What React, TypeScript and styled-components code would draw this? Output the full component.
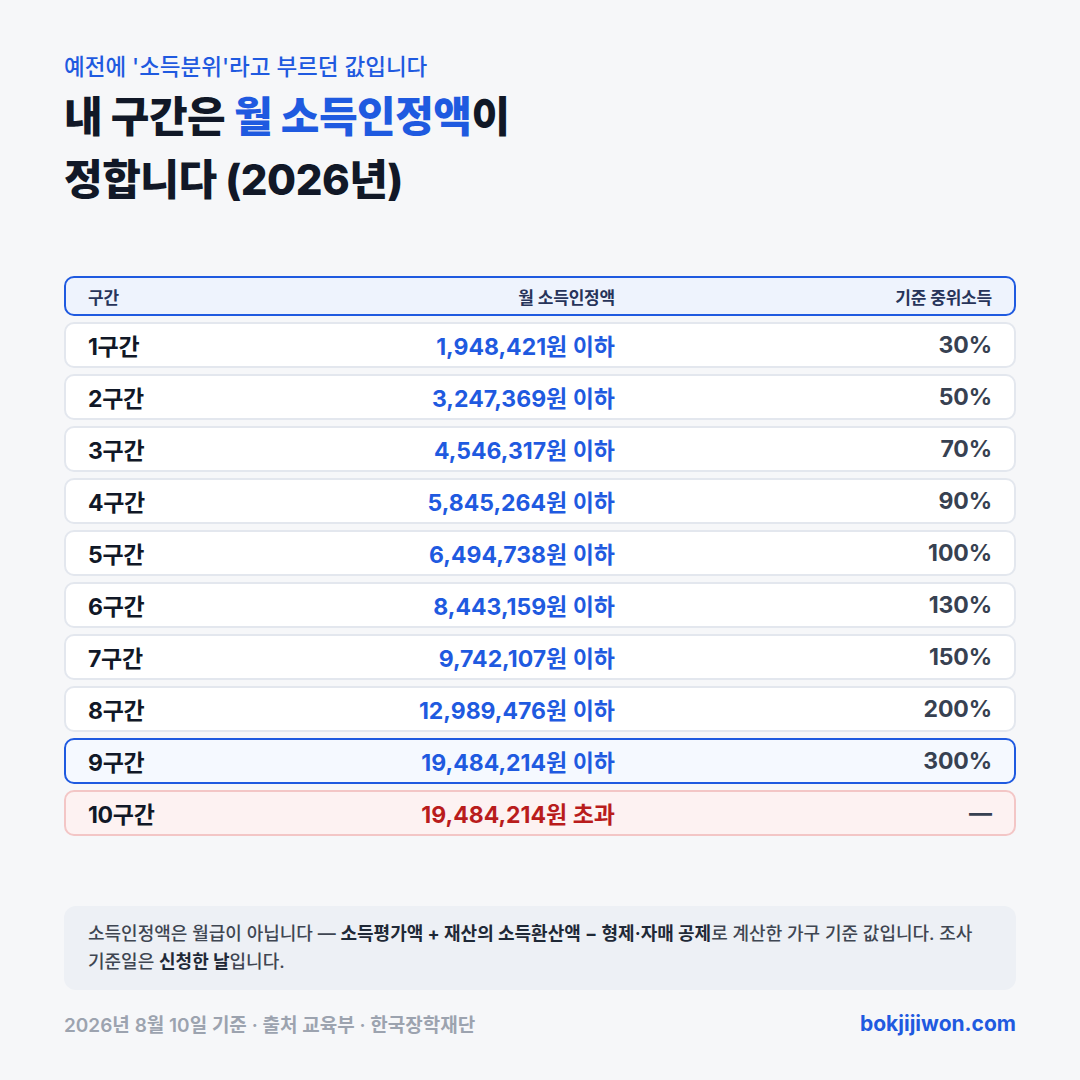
import React from "react";
import styled, {createGlobalStyle} from "styled-components";

type Row = {
    label: string;
    amount: string;
    median: string;
    tone?: "normal" | "highlight" | "over";
};

const rows: Row[] = [
    {label: "1구간", amount: "1,948,421원 이하", median: "30%"},
    {label: "2구간", amount: "3,247,369원 이하", median: "50%"},
    {label: "3구간", amount: "4,546,317원 이하", median: "70%"},
    {label: "4구간", amount: "5,845,264원 이하", median: "90%"},
    {label: "5구간", amount: "6,494,738원 이하", median: "100%"},
    {label: "6구간", amount: "8,443,159원 이하", median: "130%"},
    {label: "7구간", amount: "9,742,107원 이하", median: "150%"},
    {label: "8구간", amount: "12,989,476원 이하", median: "200%"},
    {label: "9구간", amount: "19,484,214원 이하", median: "300%", tone: "highlight"},
    {label: "10구간", amount: "19,484,214원 초과", median: "—", tone: "over"},
];

export default function App() {
    return (
        <>
            <GlobalStyle/>
            <Page>
                <Eyebrow>예전에 '소득분위'라고 부르던 값입니다</Eyebrow>
                <Title>
                    내 구간은 <Accent>월 소득인정액</Accent>이<br/>
                    정합니다 (2026년)
                </Title>

                <Table>
                    <HeaderRow>
                        <HeadCell>구간</HeadCell>
                        <HeadCell $align="right">월 소득인정액</HeadCell>
                        <HeadCell $align="right">기준 중위소득</HeadCell>
                    </HeaderRow>
                    {rows.map((row) => (
                        <DataRow key={row.label} $tone={row.tone ?? "normal"}>
                            <Label>{row.label}</Label>
                            <Amount $over={row.tone === "over"}>{row.amount}</Amount>
                            <Median>{row.median}</Median>
                        </DataRow>
                    ))}
                </Table>

                <Note>
                    소득인정액은 월급이 아닙니다 — <b>소득평가액 + 재산의 소득환산액 − 형제·자매 공제</b>로 계산한 가구 기준 값입니다. 조사
                    기준일은 <b>신청한 날</b>입니다.
                </Note>

                <Footer>
                    <Source>2026년 8월 10일 기준 · 출처 교육부 · 한국장학재단</Source>
                    <Site>bokjijiwon.com</Site>
                </Footer>
            </Page>
        </>
    );
}

const GlobalStyle = createGlobalStyle`
  html, body {
    margin: 0;
    padding: 0;
    background: #f6f7f9;
  }

  body {
    font-family: "Inter", "Noto Sans CJK KR", sans-serif;
    -webkit-font-smoothing: antialiased;
  }
`;

const Page = styled.div`
  width: 1080px;
  height: 1080px;
  box-sizing: border-box;
  padding: 52px 64px 0;
  display: flex;
  flex-direction: column;
  background: #f6f7f9;
`;

const Eyebrow = styled.div`
  font-size: 22.5px;
  line-height: 30px;
  font-weight: 500;
  color: #1f5ae0;
`;

const Title = styled.h1`
  margin: 3px 0 0;
  font-size: 42px;
  line-height: 63px;
  font-weight: 800;
  color: #111827;
  letter-spacing: -0.5px;
`;

const Accent = styled.span`
  color: #1f5ae0;
`;

const Table = styled.div`
  margin-top: 65px;
  display: flex;
  flex-direction: column;
  gap: 6px;
`;

const columns = `
  display: grid;
  grid-template-columns: 160px 367px 1fr;
  align-items: center;
  box-sizing: border-box;
  padding: 0 22px;
`;

const HeaderRow = styled.div`
  ${columns};
  height: 40px;
  border: 2px solid #1f5ae0;
  border-radius: 10px;
  background: #eef3fd;
`;

const HeadCell = styled.div<{ $align?: "left" | "right" }>`
  font-size: 17px;
  font-weight: 600;
  color: #27345a;
  text-align: ${(p) => p.$align ?? "left"};
  letter-spacing: -0.2px;
`;

const toneStyles = {
    normal: "background: #ffffff; border: 2px solid #e3e7ee;",
    highlight: "background: #f5f9ff; border: 2px solid #1f5ae0;",
    over: "background: #fdf2f2; border: 2px solid #f3c6c6;",
};

const DataRow = styled.div<{ $tone: "normal" | "highlight" | "over" }>`
  ${columns};
  height: 46px;
  border-radius: 10px;
  ${(p) => toneStyles[p.$tone]};
`;

const Label = styled.div`
  font-size: 23px;
  font-weight: 700;
  color: #111827;
  letter-spacing: -0.3px;
`;

const Amount = styled.div<{ $over?: boolean }>`
  font-size: 23px;
  font-weight: 700;
  text-align: right;
  color: ${(p) => (p.$over ? "#b91c1c" : "#1f5ae0")};
`;

const Median = styled.div`
  font-size: 23px;
  font-weight: 700;
  text-align: right;
  color: #374151;
  letter-spacing: -0.1px;
`;

const Note = styled.div`
  margin-top: 70px;
  padding: 14px 24px;
  border-radius: 12px;
  background: #edf0f5;
  font-size: 18px;
  line-height: 28px;
  font-weight: 500;
  color: #3f4652;

  b {
    font-weight: 700;
    color: #1f2937;
  }
`;

const Footer = styled.div`
  margin-top: 20px;
  display: flex;
  justify-content: space-between;
  align-items: center;
`;

const Source = styled.div`
  font-size: 19px;
  font-weight: 600;
  color: #9ca3af;
`;

const Site = styled.div`
  font-size: 21px;
  font-weight: 700;
  color: #1f5ae0;
`;
